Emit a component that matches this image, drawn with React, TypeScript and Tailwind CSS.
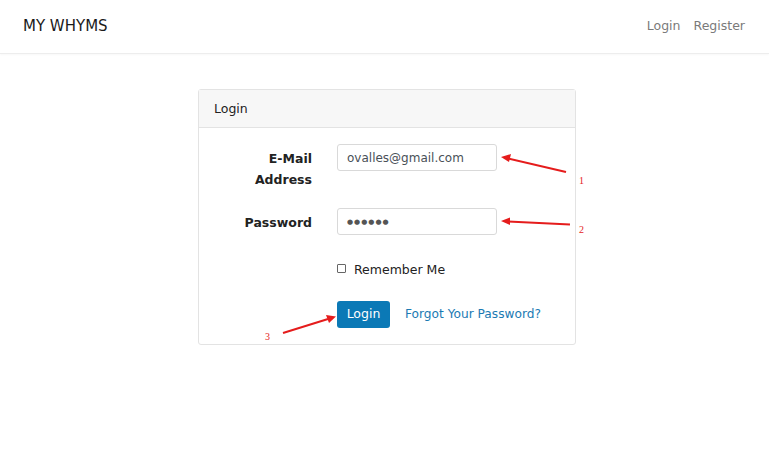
export default function App() {
  return (
    <div className="relative min-h-[471px] w-[769px] bg-white font-['DejaVu_Sans',Verdana,sans-serif] text-[12.5px] text-[#212529]">
      {/* Navbar */}
      <header className="flex h-[54px] items-center justify-between border-b border-[#ededed] px-[23px] shadow-[0_1px_2px_rgba(0,0,0,0.03)]">
        <span className="text-[15px] text-[#1a1a1a]">MY WHYMS</span>
        <nav className="flex items-center gap-[13px] pr-[1px] text-[12.5px] text-[#7a7a7a]">
          <a>Login</a>
          <a>Register</a>
        </nav>
      </header>

      {/* Card */}
      <main className="flex justify-center pl-[5px] pt-[35px]">
        <div className="w-[378px] rounded-[3px] border border-[#e3e3e3]">
          <div className="flex h-[38px] items-center border-b border-[#e3e3e3] bg-[#f7f7f7] px-[15px] pt-[2px] text-[#222]">
            Login
          </div>
          <div className="px-[15px] pb-[16px] pt-[16px]">
            <div className="mb-[18px] flex gap-[25px]">
              <label className="w-[98px] pt-[4px] text-right font-bold leading-[21px] text-[#222]">E-Mail Address</label>
              <input
                className="h-[27px] w-[160px] rounded-[3px] border border-[#d9d9d9] px-[9px] text-[12px] text-[#495057] outline-none"
                defaultValue="ovalles@gmail.com"
              />
            </div>
            <div className="flex gap-[25px]">
              <label className="w-[98px] pt-[4px] text-right font-bold leading-[21px] text-[#222]">Password</label>
              <input
                className="h-[27px] w-[160px] rounded-[3px] border border-[#d9d9d9] px-[9px] text-[7px] tracking-[1px] text-[#555] outline-none"
                defaultValue="●●●●●●"
                readOnly
              />
            </div>
            <div className="mt-[25px] flex items-center pl-[123px] leading-[20px] text-[#222]">
              <span className="mr-[8px] h-[9px] w-[9px] -translate-y-[2px] rounded-[1px] border border-[#666]" />
              Remember Me
            </div>
            <div className="mt-[21px] flex items-center gap-[15px] pl-[123px]">
              <button className="h-[27px] w-[53px] rounded-[3px] bg-[#0b79b6] text-white">Login</button>
              <a className="text-[12.2px] text-[#1b7ab3]">Forgot Your Password?</a>
            </div>
          </div>
        </div>
      </main>

      {/* Annotations */}
      <svg className="pointer-events-none absolute left-0 top-0" width="769" height="471">
        <g stroke="#e51c1c" strokeWidth="2" fill="#e51c1c">
          <line x1="566" y1="172" x2="508" y2="158.5" />
          <polygon points="501,157 511,154 509,162" stroke="none" />
          <line x1="570" y1="224.5" x2="508" y2="221.5" />
          <polygon points="501,221 510,217.5 510,225" stroke="none" />
          <line x1="283" y1="333" x2="328" y2="319" />
          <polygon points="336,316.5 326,315 329,323" stroke="none" />
        </g>
        <g fill="#e51c1c" fontFamily="'Liberation Serif', serif" fontSize="10">
          <text x="579" y="184">1</text>
          <text x="579" y="233">2</text>
          <text x="265" y="340">3</text>
        </g>
      </svg>
    </div>
  )
}
